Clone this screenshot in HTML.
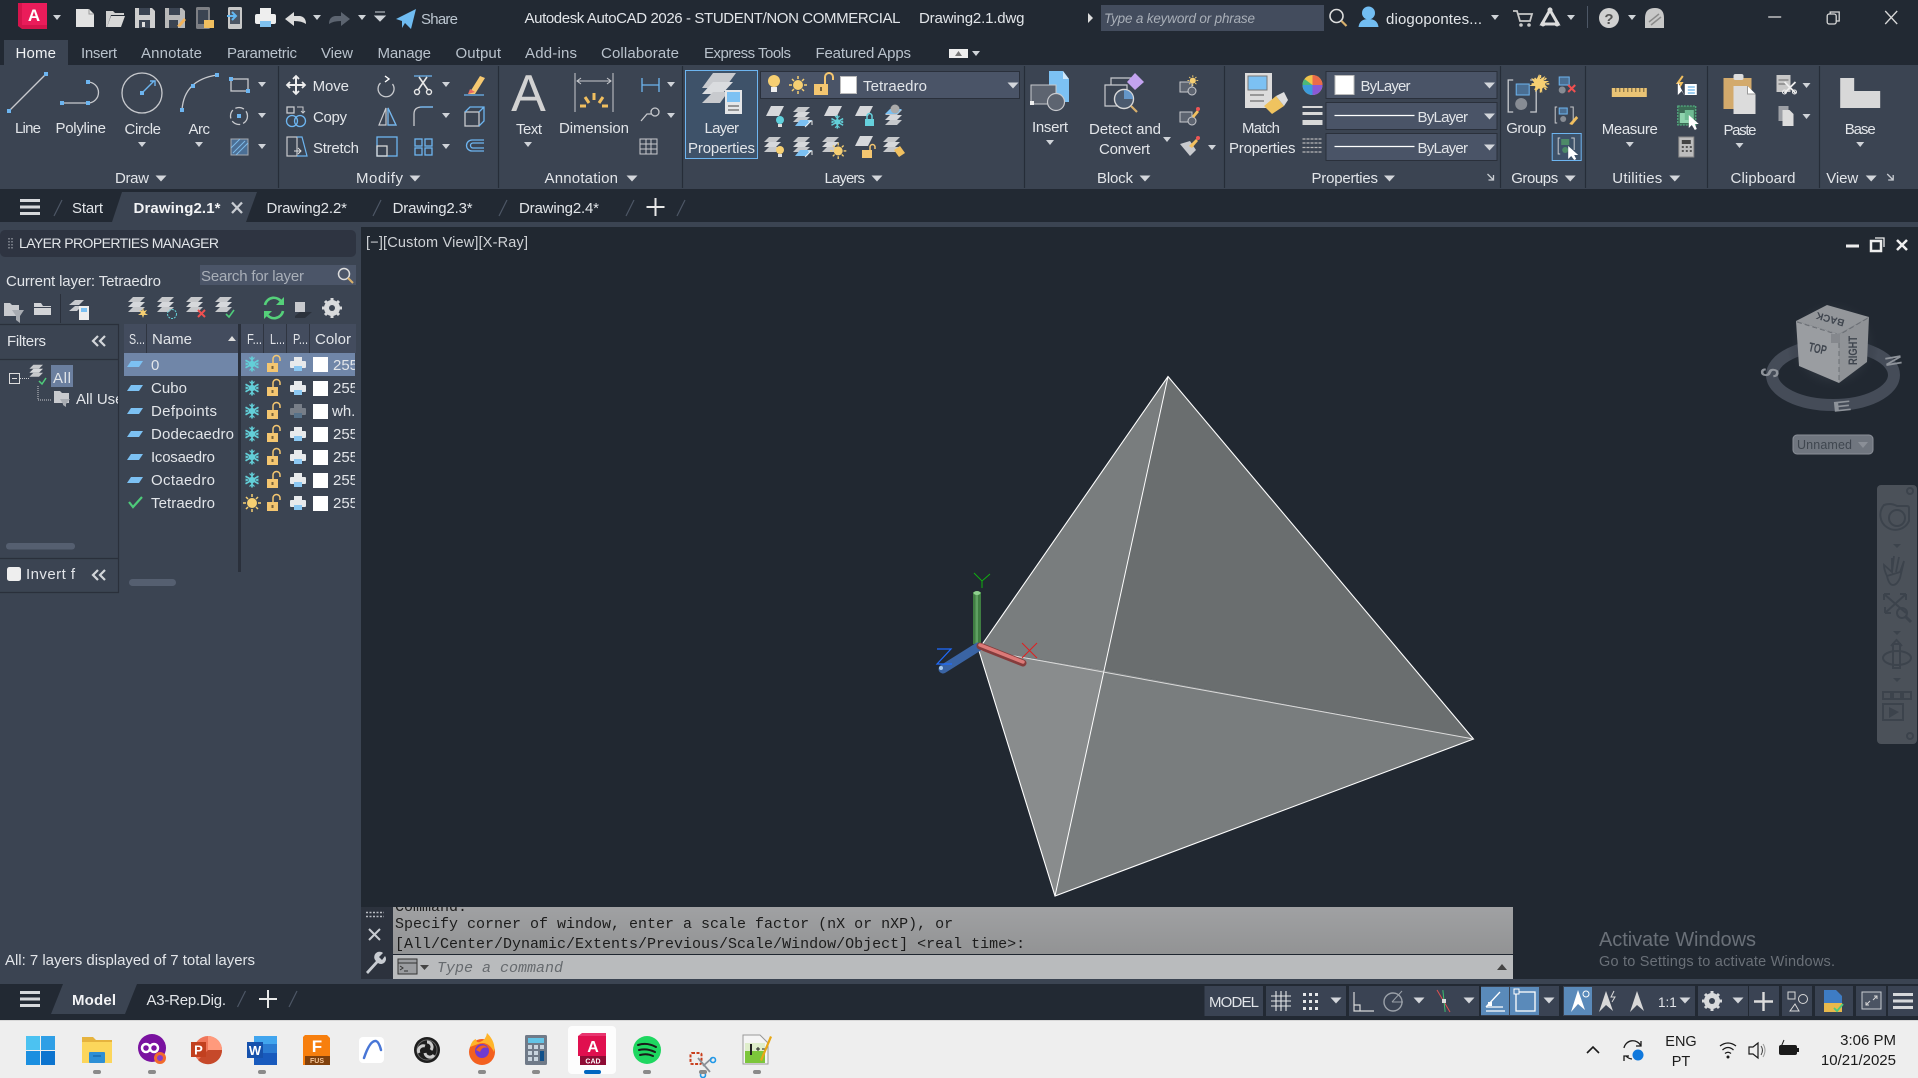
<!DOCTYPE html>
<html lang="en"><head><meta charset="utf-8"><title>Autodesk AutoCAD 2026</title>
<style>
html,body{margin:0;padding:0;width:1918px;height:1078px;overflow:hidden;background:#222933}
svg{display:block;font-family:"Liberation Sans",sans-serif;font-size:15px}
text{fill:#e2e5e9}
.tab text,text.tab{fill:#b9c2cc}
.m{font-family:"Liberation Mono",monospace;fill:#1c1c1c}
.tb{fill:#1b1b1b;font-size:14.500px}
.tm{fill:#1b1b1b;font-size:15px}
</style></head><body>
<svg width="1918" height="1078" viewBox="0 0 1918 1078" xmlns="http://www.w3.org/2000/svg">
<defs>
<path id="arr" d="M-4-2H4L0 3Z" fill="#cfd3d8"/>
<path id="arl" d="M-5.500-2.500H5.500L0 3.500Z" fill="#d3d6db"/>
<g id="h"><rect x="-2" y="-2" width="4" height="4" fill="#6db5f0"/></g>
<path id="slash" d="M4-8L-4 8" stroke="#4d5766" stroke-width="1.200" fill="none"/>
<g id="burger" fill="#d6d8db"><rect x="-10" y="-8" width="20" height="3"/><rect x="-10" y="-1.500" width="20" height="3"/><rect x="-10" y="5" width="20" height="3"/></g>
<g id="stk" fill="#c6c8cb"><path d="M-9-5L-4-10H8L3-5Z"/><path d="M-9 0L-4-5H8L3 0Z" fill="#d6d8db"/><path d="M-9 5L-4 0H8L3 5Z"/></g>
<path id="pl" d="M-9 5L-4-5H9L4 5Z" fill="#d6d8db"/>
<g id="lbulb"><circle cy="-1" r="4" fill="#5fd0dc"/><rect x="-2" y="3" width="4" height="3" fill="#ddd"/></g>
<g id="ybulb"><circle cy="-1" r="4" fill="#f6cf72"/><rect x="-2" y="3" width="4" height="3" fill="#ddd"/></g>
<g id="lock"><path d="M-1 -1V-5A3.500 3.500 0 0 1 6-5V-3" fill="none" stroke="#f4c670" stroke-width="1.500"/><rect x="-7" y="-1" width="11" height="9" fill="#f4c670"/><rect x="-2.500" y="2" width="2" height="3" fill="#77623a"/></g>
<g id="snow" stroke="#63cfd8" stroke-width="1.700" fill="none"><path d="M0-7.500V7.500M-6.500-3.700L6.500 3.700M-6.500 3.700L6.500-3.700"/><circle r="2.300" fill="#63cfd8"/><path d="M-2.500-6.500L0-4L2.500-6.500M-2.500 6.500L0 4L2.500 6.500M-6.500-1L-4 0L-6.500 1M6.500-1L4 0L6.500 1" stroke-width="1.200"/></g>
<g id="print"><rect x="-4" y="-7" width="8" height="4" fill="#e8eaec"/><rect x="-8" y="-3" width="16" height="7" rx="1" fill="#e8eaec"/><rect x="-4" y="2" width="8" height="5" fill="#8cc8f2"/></g>
<g id="sun"><circle r="5" fill="#f6cf72"/><path d="M0-9V-6M0 9V6M-9 0H-6M9 0H6M-6-6L-4-4M6 6L4 4M-6 6L-4 4M6-6L4-4" stroke="#f6cf72" stroke-width="1.500"/></g>
<path id="lyr" d="M-8 3L-4-3H8L4 3Z" fill="#7cc1f3"/>
<g id="gear"><circle r="6" fill="none" stroke="#d8dadc" stroke-width="4"/><path d="M0-10V10M-10 0H10M-7-7L7 7M-7 7L7-7" stroke="#d8dadc" stroke-width="3"/><circle r="3" fill="#3b4452"/></g>
<path id="chev" d="M-3-5L-8 0L-3 5M4-5L-1 0L4 5" fill="none" stroke="#d2d5d9" stroke-width="2.200"/>
<path id="corner" d="M-3-3L3 3M3-2V3H-2" fill="none" stroke="#c8ccd2" stroke-width="1.300"/>
<clipPath id="col"><rect x="310" y="320" width="45" height="200"/></clipPath>
<clipPath id="use"><rect x="0" y="380" width="118" height="40"/></clipPath>
<clipPath id="cmd"><rect x="393" y="907" width="1120" height="47"/></clipPath>
<linearGradient id="cg" x1="0" y1="0" x2="0" y2="1"><stop offset="0" stop-color="#a0a1a3"/><stop offset="1" stop-color="#929394"/></linearGradient>
<radialGradient id="glow"><stop offset="0" stop-color="#5c626b"/><stop offset=".7" stop-color="#3a414b"/><stop offset="1" stop-color="#222932" stop-opacity="0"/></radialGradient>
</defs>

<rect width="1918" height="1078" fill="#212831"/>

<!-- TITLE BAR -->
<rect width="1918" height="65" fill="#222933"/>
<path d="M18 3H47V29H22L18 26Z" fill="#d5144c"/><path d="M22 3H47V25H22Z" fill="#ea1c5a"/>
<text x="34" y="21" text-anchor="middle" font-size="17" font-weight="bold" style="fill:#fff">A</text>
<use href="#arr" x="57" y="17"/>
<path d="M76 9H89L94 14V27H76Z" fill="#e2e2e2"/><path d="M89 9V14H94" fill="none" stroke="#9a9a9a"/>
<path d="M106 27V11H113L115 13H124V15H111L107 27Z" fill="#d0d0d0"/><path d="M107 27L111 16H125L121 27Z" fill="#d8d8d8"/>
<path d="M135 8H152L155 11V28H135Z" fill="#cfcfcf"/><rect x="139" y="8" width="11" height="7" fill="#3b4452"/><rect x="139" y="20" width="11" height="8" fill="#3b4452"/><rect x="142" y="22" width="3" height="5" fill="#ddd"/>
<path d="M165 8H182L185 11V28H165Z" fill="#b9b9b9"/><rect x="169" y="8" width="11" height="7" fill="#3b4452"/><rect x="169" y="20" width="9" height="8" fill="#3b4452"/><path d="M177 26L184 18L186 20L180 27Z" fill="#f2b35c"/>
<rect x="196" y="7" width="14" height="22" rx="1.500" fill="#7d7f84"/><rect x="198" y="10" width="10" height="14" fill="#3b4452"/><path d="M204 20H214V28H204Z" fill="#f1bf5f"/>
<rect x="228" y="7" width="14" height="22" rx="1.500" fill="#c8c8c8"/><rect x="230" y="10" width="10" height="14" fill="#4b5563"/><path d="M227 16H235M232 12L236 16L232 20" fill="none" stroke="#63b7f1" stroke-width="2"/>
<rect x="260" y="8" width="11" height="6" fill="#eee"/><rect x="255" y="14" width="21" height="10" rx="2" fill="#eee"/><rect x="260" y="21" width="11" height="6" fill="#80c2f0"/>
<path d="M285 19L294 12V16H300Q306 17 306 24Q302 21 294 21V26Z" fill="#dcdcdc"/>
<use href="#arr" x="317" y="17"/>
<path d="M350 19L341 12V16H335Q329 17 329 24Q333 21 341 21V26Z" fill="#5c6470"/>
<use href="#arr" x="362" y="17"/>
<path d="M375 12H385M375 16H385L380 21Z" fill="#cfd3d8" stroke="#cfd3d8" stroke-width="1"/>
<path d="M396 19L416 9L411 29L405 23L402 28V21Z" fill="#6fbcf2"/>
<text x="421" y="24" textLength="37" style="fill:#bcc6d0">Share</text>
<text x="524.500" y="23" textLength="376">Autodesk AutoCAD 2026 - STUDENT/NON COMMERCIAL</text>
<text x="919" y="23" textLength="105.500">Drawing2.1.dwg</text>
<path d="M1088 13L1093 18L1088 23Z" fill="#ddd"/>
<rect x="1101" y="5" width="223" height="26" fill="#434c5d"/>
<text x="1104" y="23" textLength="151" font-size="13.500" font-style="italic" style="fill:#a9afb8">Type a keyword or phrase</text>
<g transform="translate(-.5,0)">
<circle cx="1337" cy="16" r="6.500" fill="none" stroke="#ddd" stroke-width="1.600"/><path d="M1342 21L1347 26" stroke="#d8b06c" stroke-width="2.200"/>
<circle cx="1369" cy="13" r="6.500" fill="#72bdf2"/><path d="M1359 27Q1360 19 1369 19Q1378 19 1379 27Z" fill="#72bdf2"/>
</g>
<g transform="translate(-1,0)">
<text x="1387" y="24" textLength="96" font-size="15">diogopontes...</text>
<use href="#arr" x="1496" y="17"/>
<path d="M1514 11H1518L1521 21H1531L1533 14H1519" fill="none" stroke="#c8c8c8" stroke-width="1.800"/><circle cx="1522" cy="25" r="1.800" fill="#c8c8c8"/><circle cx="1530" cy="25" r="1.800" fill="#c8c8c8"/>
<path d="M1551 10L1559 24H1543Z" fill="none" stroke="#dcdcdc" stroke-width="3"/><circle cx="1551" cy="10" r="2.500" fill="#dcdcdc"/><circle cx="1544" cy="24" r="2.500" fill="#dcdcdc"/><circle cx="1558" cy="24" r="2.500" fill="#dcdcdc"/>
<use href="#arr" x="1572" y="17"/>
<path d="M1588.500 6V28" stroke="#4d5766"/>
<circle cx="1610" cy="18" r="10" fill="#d0d0d0"/><text x="1610" y="24" text-anchor="middle" font-size="15" font-weight="bold" style="fill:#555">?</text>
<use href="#arr" x="1633" y="17"/>
<path d="M1646 28V18Q1646 8 1656 8Q1665 8 1665 18V28Z" fill="#c8c8c8"/><path d="M1650 22L1660 14M1652 25L1662 17" stroke="#8a8a8a" stroke-width="1.500"/>
</g>
<g transform="translate(-1.800,0)">
<path d="M1770 17H1783" stroke="#d8d8d8" stroke-width="1.300"/>
<rect x="1829" y="14" width="9" height="10" rx="2" fill="none" stroke="#d8d8d8" stroke-width="1.300"/><path d="M1832 14V12H1841V21H1838" fill="none" stroke="#d8d8d8" stroke-width="1.300"/>
<path d="M1887 11L1899 24M1899 11L1887 24" stroke="#d8d8d8" stroke-width="1.300"/>
</g>

<!-- TABS -->
<rect x="4" y="40" width="64" height="25" fill="#3b4452"/>
<text x="15.500" y="58" textLength="40.500" style="fill:#f0f2f4">Home</text>
<g class="tab">
<text x="81" y="58" textLength="36">Insert</text>
<text x="141" y="58" textLength="61">Annotate</text>
<text x="227" y="58" textLength="70">Parametric</text>
<text x="321" y="58" textLength="32">View</text>
<text x="377.500" y="58" textLength="53.500">Manage</text>
<text x="455.500" y="58" textLength="45.500">Output</text>
<text x="525" y="58" textLength="52">Add-ins</text>
<text x="601" y="58" textLength="78">Collaborate</text>
<text x="704" y="58" textLength="87">Express Tools</text>
<text x="815.500" y="58" textLength="95.500">Featured Apps</text>
</g>
<rect x="949" y="49" width="19" height="9" fill="#eee"/><path d="M955 56L958.500 51L962 56Z" fill="#777"/>
<use href="#arr" x="976" y="53"/>

<!-- RIBBON -->
<rect y="65" width="1918" height="124" fill="#3b4452"/>
<path d="M278.500 66V188M498.500 66V188M682.500 66V188M1024.500 66V188M1224.500 66V188M1500.500 66V188M1585.500 66V188M1707.500 66V188M1819.500 66V188" stroke="#262d38" stroke-width="1.200"/>

<!-- Draw -->
<path d="M9 111L46 74" stroke="#c8cace" stroke-width="1.300"/><use href="#h" x="9" y="111"/><use href="#h" x="46" y="74"/>
<text x="15" y="133" textLength="26">Line</text>
<path d="M62 103H88A10 10 0 0 0 88 82" fill="none" stroke="#c8cace" stroke-width="1.300"/><use href="#h" x="62" y="103"/><use href="#h" x="88" y="103"/><use href="#h" x="88" y="82"/>
<text x="55.500" y="133" textLength="50.500">Polyline</text>
<circle cx="142" cy="93" r="20" fill="none" stroke="#c8cace" stroke-width="1.300"/><path d="M142 93L154 81M150 81H155V86" fill="none" stroke="#6db5f0" stroke-width="1.400"/><use href="#h" x="142" y="93"/>
<text x="124.500" y="134" textLength="36.500">Circle</text><use href="#arr" x="142" y="144"/>
<path d="M182 110Q184 80 217 75" fill="none" stroke="#c8cace" stroke-width="1.300"/><use href="#h" x="182" y="110"/><use href="#h" x="193" y="86"/><use href="#h" x="217" y="75"/>
<text x="188.500" y="134" textLength="21.500">Arc</text><use href="#arr" x="199" y="144"/>
<rect x="231" y="79" width="17" height="12" fill="none" stroke="#c8cace" stroke-width="1.300"/><use href="#h" x="231" y="79"/><use href="#h" x="248" y="91"/><use href="#arr" x="262" y="84"/>
<circle cx="239" cy="116" r="8.500" fill="none" stroke="#c8cace" stroke-width="1.300" stroke-dasharray="9 3"/><use href="#h" x="239" y="116"/><use href="#arr" x="262" y="115"/>
<rect x="231" y="139" width="17" height="16" fill="#4b6f95" stroke="#a6aab0"/><path d="M233 153L245 141M236 155L248 143M231 148L240 139" stroke="#7cb9e8"/><use href="#arr" x="262" y="146"/>
<text x="115" y="183" textLength="34">Draw</text><use href="#arl" x="161" y="178"/>

<!-- Modify -->
<path d="M296 77V93M288 85H304" stroke="#eee" stroke-width="2"/><path d="M293 79L296 76L299 79M293 91L296 94L299 91M290 82L287 85L290 88M302 82L305 85L302 88" fill="none" stroke="#eee" stroke-width="1.800"/>
<text x="312.600" y="91" textLength="36.400">Move</text>
<rect x="287" y="107" width="7" height="6" fill="none" stroke="#c8cace" stroke-width="1.300"/><path d="M297 107H303V113M301 111L303 113L305 111" fill="none" stroke="#c8cace"/><circle cx="292" cy="121" r="5.500" fill="none" stroke="#6db5f0" stroke-width="1.300"/><circle cx="300" cy="121" r="5.500" fill="none" stroke="#6db5f0" stroke-width="1.300"/>
<text x="313" y="122" textLength="34">Copy</text>
<rect x="287" y="137" width="10" height="19" fill="none" stroke="#c8cace" stroke-width="1.200"/><path d="M297 137H302L307 156H297" fill="none" stroke="#6db5f0" stroke-width="1.200"/><path d="M294 151H301M298 148L301 151L298 154" fill="none" stroke="#ddd"/>
<text x="313" y="153" textLength="46">Stretch</text>
<path d="M381 76A8 8 0 1 0 393 77" fill="none" stroke="#c8cace" stroke-width="1.300" transform="translate(-.5,7)"/><path d="M385 76L389 79L385 82" fill="none" stroke="#fff" stroke-width="1.400"/>
<path d="M386 108L379 125H386ZM388 108L396 125H388Z" fill="none" stroke="#c8cace" stroke-width="1.200"/><path d="M388 108L396 125H388Z" fill="none" stroke="#6db5f0" stroke-width="1.200"/>
<rect x="377" y="137" width="20" height="19" fill="none" stroke="#6db5f0" stroke-width="1.300"/><rect x="377" y="146" width="10" height="10" fill="none" stroke="#d8d8d8" stroke-width="1.300"/>
<path d="M414 76H432" stroke="#6db5f0" stroke-width="1.300"/><path d="M419 77L428 90M427 77L418 90" stroke="#e8e8e8" stroke-width="1.600"/><circle cx="417" cy="92" r="2.500" fill="none" stroke="#e8e8e8" stroke-width="1.400"/><circle cx="429" cy="92" r="2.500" fill="none" stroke="#e8e8e8" stroke-width="1.400"/>
<use href="#arr" x="446" y="84"/>
<path d="M414 126V114Q414 107 422 107H433" fill="none" stroke="#c8cace" stroke-width="1.300"/><path d="M420 107H433" stroke="#6db5f0" stroke-width="1.300"/><use href="#arr" x="446" y="115"/>
<g fill="none" stroke="#6db5f0" stroke-width="1.300"><rect x="415" y="139" width="7" height="7"/><rect x="425" y="139" width="7" height="7"/><rect x="415" y="148" width="7" height="7"/><rect x="425" y="148" width="7" height="7"/></g><use href="#arr" x="446" y="146"/>
<path d="M470 92L480 76L485 78L475 94H468Z" fill="#f6c971"/><path d="M468 94L470 89L475 92Z" fill="#e86a63"/><path d="M464 95H484" stroke="#6db5f0" stroke-width="1.200"/>
<rect x="465" y="112" width="14" height="14" fill="none" stroke="#c8cace" stroke-width="1.300"/><path d="M465 112L470 107H484V121L479 126M479 112L484 107" fill="none" stroke="#6db5f0" stroke-width="1.300"/>
<path d="M484 140H472A5.500 5.500 0 0 0 472 151H484M484 143H473A2.500 2.500 0 0 0 473 148H484" fill="none" stroke="#6db5f0" stroke-width="1.300"/>
<text x="356" y="183" textLength="47">Modify</text><use href="#arl" x="415" y="178"/>

<!-- Annotation -->
<text x="528.500" y="111" text-anchor="middle" font-size="52" style="fill:#d2d2d2">A</text>
<text x="516" y="134" textLength="26">Text</text><use href="#arr" x="528" y="144"/>
<path d="M575 73V112M613 73V112" stroke="#c8cace"/><path d="M577 81H611M581 78L577 81L581 84M607 78L611 81L607 84" fill="none" stroke="#c8cace"/>
<path d="M594 93V100M585 97L589 103M603 97L599 103M580 106H586M602 106H608" stroke="#f1bf5f" stroke-width="3"/>
<text x="559" y="133" textLength="70">Dimension</text>
<path d="M642 78V92M659 78V92M642 85H659" stroke="#6db5f0" stroke-width="1.300"/><use href="#arr" x="671" y="84"/>
<path d="M641 121L647 114H651" fill="none" stroke="#c8cace" stroke-width="1.300"/><circle cx="655" cy="112" r="4" fill="none" stroke="#c8cace" stroke-width="1.300"/><use href="#arr" x="671" y="115"/>
<g fill="none" stroke="#c8cace"><rect x="640" y="139" width="17" height="15"/><path d="M640 144H657M640 149H657M646 139V154M651 139V154"/></g>
<text x="544.500" y="183" textLength="73.500">Annotation</text><use href="#arl" x="632" y="178"/>

<!-- Layers -->
<rect x="685.500" y="70.500" width="72" height="88" fill="#3e5269" stroke="#6db5f0"/>
<g fill="#c8cace"><path d="M702 88L713 73H736L725 88Z"/><path d="M702 94L713 82H733L722 94Z" fill="#dadcdf"/><path d="M702 103L713 92H728L720 103Z"/></g>
<rect x="725" y="90" width="17" height="24" fill="#e4e6e8"/><rect x="727" y="92" width="13" height="10" fill="#7cc1f3"/><path d="M728 106H739M728 110H739" stroke="#444"/>
<text x="704.500" y="133" textLength="34.500">Layer</text>
<text x="688" y="153" textLength="67">Properties</text>
<rect x="760.500" y="71.500" width="259" height="27" fill="#4a5467" stroke="#2a303b"/>
<circle cx="774" cy="81" r="6" fill="#f6cf72"/><rect x="771" y="87" width="6" height="5" fill="#eee"/>
<use href="#sun" x="798" y="85"/>
<path d="M825 84V77A4 4 0 0 1 833 77V80" fill="none" stroke="#f4c670" stroke-width="2"/><rect x="814" y="84" width="14" height="11" fill="#f4c670"/><rect x="820" y="87" width="2" height="4" fill="#77623a"/>
<rect x="840.500" y="76.500" width="16" height="17" fill="#fff" stroke="#bbb"/>
<text x="863" y="91" textLength="64">Tetraedro</text><use href="#arl" x="1013" y="85"/>
<use href="#pl" x="775" y="111"/><use href="#lbulb" x="780" y="121"/>
<use href="#stk" x="802" y="117"/><path d="M795 126L800 120H812L807 126Z" fill="#7cc1f3"/><path d="M805 127L811 121M808 121H812V125" stroke="#eee" fill="none"/>
<use href="#pl" x="833" y="111"/><use href="#snow" x="837" y="121" transform="translate(84,13) scale(.9)"/>
<use href="#pl" x="864" y="111"/><rect x="865" y="119" width="9" height="7" fill="#66d1dd"/><path d="M867 119V116A2.500 2.500 0 0 1 872 116V119" fill="none" stroke="#66d1dd" stroke-width="1.500"/>
<g transform="translate(894,117)"><use href="#stk" y="3"/><path d="M-9-3L-4-8H8L3-3Z" fill="#7cc1f3"/><circle cy="-8" cx="1" r="4.500" fill="#aaa"/></g>
<use href="#stk" x="773" y="147"/><use href="#ybulb" x="780" y="151"/>
<use href="#stk" x="802" y="147"/><path d="M795 156L800 150H812L807 156Z" fill="#7cc1f3"/><path d="M805 157L811 151M808 151H812V155" stroke="#eee" fill="none"/>
<use href="#stk" x="831" y="147"/><use href="#sun" x="838" y="151" transform="translate(84,15) scale(.9)"/>
<use href="#pl" x="864" y="141"/><rect x="862" y="150" width="10" height="8" fill="#f4c670"/><path d="M870 150V147A2.500 2.500 0 0 1 875 147V149" fill="none" stroke="#f4c670" stroke-width="1.500"/>
<use href="#stk" x="892" y="147"/><path d="M894 150L900 146L905 153L899 157Z" fill="#f0c060"/>
<text x="824.500" y="183" textLength="40.500">Layers</text><use href="#arl" x="877" y="178"/>

<!-- Block -->
<path d="M1049 71H1063L1069 79V102H1049Z" fill="#7cc1f3"/><path d="M1063 71V79H1069" fill="#cfe8fb"/>
<rect x="1031" y="85" width="25" height="19" fill="#5d6470" stroke="#c8cace"/><circle cx="1056" cy="102" r="8.500" fill="#5d6470" stroke="#c8cace" stroke-width="1.200"/><rect x="1030" y="101" width="4" height="4" fill="#eee"/>
<text x="1032" y="132" textLength="36">Insert</text><use href="#arr" x="1050" y="142"/>
<path d="M1111 85V78H1132V84M1105 85H1127V106H1105Z" fill="none" stroke="#c8cace" stroke-width="1.200"/><path d="M1135 73L1144 82L1135 90L1127 82Z" fill="#c3a3f0"/>
<circle cx="1124" cy="99" r="9.500" fill="#4b5a6e" stroke="#d8d8d8" stroke-width="1.400"/><path d="M1124 99V90A9 9 0 0 1 1133 99Z" fill="#6496c8"/><path d="M1131 106L1137 112" stroke="#d8b06c" stroke-width="2.200"/>
<text x="1089" y="134" textLength="72">Detect and</text><text x="1099" y="154" textLength="51">Convert</text><use href="#arr" x="1167" y="139"/>
<rect x="1180" y="82" width="12" height="10" fill="#5d6470" stroke="#c8cace"/><circle cx="1192" cy="91" r="4" fill="#5d6470" stroke="#c8cace"/><use href="#sun" x="1193" y="81" transform="translate(477,32) scale(.6)"/>
<rect x="1180" y="112" width="12" height="10" fill="#5d6470" stroke="#c8cace"/><circle cx="1192" cy="121" r="4" fill="#5d6470" stroke="#c8cace"/><path d="M1192 116L1197 110L1199 112L1194 118Z" fill="#f1bf5f"/><circle cx="1198" cy="109" r="2" fill="#e55"/>
<path d="M1180 144L1190 141L1196 150L1190 156Z" fill="#c8cace"/><path d="M1189 146L1196 139L1198 141L1192 148Z" fill="#f1bf5f"/><circle cx="1198" cy="138" r="2" fill="#e55"/>
<use href="#arr" x="1212" y="147"/>
<text x="1097" y="183" textLength="36">Block</text><use href="#arl" x="1145" y="178"/>

<!-- Properties -->
<rect x="1245" y="73" width="27" height="35" fill="#dcdcdc"/><rect x="1248" y="76" width="19" height="14" fill="#7cc1f3" stroke="#777"/><path d="M1250 95H1264M1250 101H1264" stroke="#555"/>
<path d="M1264 106L1276 96L1284 106L1272 114Z" fill="#efc35f"/><path d="M1276 96L1284 92L1288 100L1284 106Z" fill="#ddd"/>
<text x="1242" y="133" textLength="38">Match</text><text x="1229" y="153" textLength="66.500">Properties</text>
<g transform="translate(-.5,0)">
<circle cx="1313" cy="85" r="10" fill="#f0c44c"/><path d="M1313 85V75A10 10 0 0 1 1323 85Z" fill="#ea6b4a"/><path d="M1313 85H1323A10 10 0 0 1 1313 95Z" fill="#8a5ad6"/><path d="M1313 85V95A10 10 0 0 1 1303 85Z" fill="#3c9bdc"/><path d="M1313 85H1303A10 10 0 0 1 1305 79Z" fill="#4cb87a"/>
<g fill="#d8d8d8"><rect x="1303" y="106" width="20" height="2"/><rect x="1303" y="112" width="20" height="3"/><rect x="1303" y="120" width="20" height="5"/></g>
<path d="M1303 139H1323M1303 143H1323M1303 147.500H1323M1303 152H1323" stroke="#b8b8b8" stroke-width="1.200" stroke-dasharray="3 1"/>
<g fill="#4a5467" stroke="#2a303b"><rect x="1326.500" y="71.500" width="171" height="27"/><rect x="1326.500" y="102.500" width="171" height="27"/><rect x="1326.500" y="133.500" width="171" height="27"/></g>
<rect x="1335.500" y="75.500" width="19" height="19" fill="#fff" stroke="#bbb"/>
<text x="1361" y="91" textLength="50">ByLayer</text><use href="#arl" x="1490" y="85"/>
<path d="M1335 115.500H1415M1335 146.500H1415" stroke="#fff" stroke-width="1.200"/>
<text x="1418" y="122" textLength="50.500">ByLayer</text><use href="#arl" x="1490" y="116"/>
<text x="1418" y="153" textLength="50.500">ByLayer</text><use href="#arl" x="1490" y="147"/>
<text x="1312" y="183" textLength="66.500">Properties</text><use href="#arl" x="1390" y="178"/><use href="#corner" x="1491" y="177"/>
</g>

<!-- Groups -->
<g transform="translate(-.8,0)">
<path d="M1514 80H1509V112H1514M1531 80H1537V112H1531" fill="none" stroke="#c8cace" stroke-width="1.300"/>
<rect x="1517" y="84" width="13" height="11" fill="#4a6e92" stroke="#6db5f0"/><circle cx="1522" cy="104" r="6" fill="#878c94"/>
<use href="#sun" x="1537" y="82" transform="translate(35,3.500) scale(.98)"/><path d="M1537 80l3-6l1 5l5-3l-2 5l6 0l-5 3l4 4l-6-1l0 6l-3-5l-4 4l0-6l-6 0l5-3l-3-5l5 2z" fill="#f6cf72"/>
<text x="1507" y="133" textLength="40">Group</text>
<rect x="1560" y="77" width="10" height="8" fill="#4a6e92" stroke="#6db5f0"/><circle cx="1563" cy="90" r="3.500" fill="#878c94"/><path d="M1569 85L1576 92M1576 85L1569 92" stroke="#f05050" stroke-width="2"/>
<path d="M1558 107H1556V123H1558M1571 107H1574V123H1571" fill="none" stroke="#c8cace"/><rect x="1560" y="108" width="8" height="6" fill="#4a6e92" stroke="#6db5f0"/><circle cx="1564" cy="119" r="3" fill="#878c94"/><path d="M1570 124L1577 116L1579 118L1573 125Z" fill="#f1bf5f"/>
<rect x="1553" y="133.500" width="29" height="27" fill="#3e5269" stroke="#6db5f0"/>
<path d="M1561 138H1559V154H1561M1572 138H1575V150" fill="none" stroke="#c8cace"/><rect x="1562" y="139" width="8" height="6" fill="#4d8a68"/><circle cx="1566" cy="150" r="3" fill="#4d8a68"/><path d="M1569 146V159L1572 156L1575 160L1577 159L1575 155H1579Z" fill="#fff"/>
<text x="1512" y="183" textLength="47">Groups</text><use href="#arl" x="1571" y="178"/>
</g>

<!-- Utilities -->
<g transform="translate(-1.200,0)">
<rect x="1613" y="88" width="35" height="9" fill="#eac475"/><path d="M1617 88V92M1621 88V92M1625 88V92M1629 88V92M1633 88V92M1637 88V92M1641 88V92M1645 88V92" stroke="#6a5c3c"/>
<text x="1603" y="134" textLength="56">Measure</text><use href="#arr" x="1631" y="144"/>
<path d="M1684 76L1679 83H1683L1680 88" stroke="#f1bf5f" stroke-width="2" fill="none"/><path d="M1679 82V95L1683 91L1686 96Z" fill="#fff"/><rect x="1686" y="84" width="12" height="11" fill="#fff"/><path d="M1689 87H1696M1689 90H1696M1689 93H1696" stroke="#3c9bdc"/>
<rect x="1679" y="106" width="18" height="19" fill="#3b6a55" stroke="#59c08a" stroke-dasharray="2 1"/><rect x="1681" y="113" width="9" height="10" fill="#8fd3ae"/><rect x="1686" y="110" width="9" height="10" fill="#6fbb93"/><path d="M1690 115V128L1693 125L1696 130L1698 129L1696 124H1700Z" fill="#fff"/>
<rect x="1680" y="137" width="15" height="20" fill="#bdbdbd" stroke="#888"/><rect x="1683" y="140" width="9" height="4" fill="#444"/><g fill="#555"><rect x="1683" y="146" width="2" height="2"/><rect x="1687" y="146" width="2" height="2"/><rect x="1691" y="146" width="2" height="2"/><rect x="1683" y="150" width="2" height="2"/><rect x="1687" y="150" width="2" height="2"/><rect x="1691" y="150" width="2" height="2"/></g>
<text x="1613.500" y="183" textLength="50">Utilities</text><use href="#arl" x="1676" y="178"/>
</g>

<!-- Clipboard -->
<g transform="translate(-1.500,0)">
<rect x="1725" y="78" width="28" height="31" fill="#d3aa6c"/><rect x="1735" y="74" width="10" height="6" rx="2" fill="#ddd"/><path d="M1735 86H1749L1757 94V114H1735Z" fill="#dcdcdc"/><path d="M1749 86V94H1757" fill="#fff" stroke="#999"/>
<text x="1725" y="135" textLength="33">Paste</text><use href="#arr" x="1741" y="145"/>
<rect x="1778" y="75" width="14" height="17" fill="#c8c8c8"/><path d="M1780 80H1790M1780 84H1788" stroke="#666"/><path d="M1786 82L1797 93M1797 82L1786 93" stroke="#eee" stroke-width="1.800"/><circle cx="1786" cy="92" r="2" fill="none" stroke="#eee"/><circle cx="1796" cy="92" r="2" fill="none" stroke="#eee"/>
<use href="#arr" x="1808" y="85"/>
<rect x="1780" y="106" width="10" height="15" fill="#9c9fa5"/><path d="M1784 110H1791L1795 114V126H1784Z" fill="#dcdcdc"/>
<use href="#arr" x="1808" y="116"/>
<text x="1732" y="183" textLength="65">Clipboard</text>
</g>

<!-- View -->
<g transform="translate(-1.800,0)">
<path d="M1842 78H1856V91H1882V108H1842Z" fill="#d8d8d8"/>
<text x="1846.500" y="134" textLength="31">Base</text><use href="#arr" x="1862" y="144"/>
<text x="1828" y="183" textLength="32">View</text><use href="#arl" x="1873" y="178"/><use href="#corner" x="1892" y="177"/>
</g>

<!-- FILE TABS -->
<rect y="189" width="1918" height="33" fill="#222933"/>
<use href="#burger" x="30" y="207"/>
<use href="#slash" x="58" y="208"/>
<text x="72" y="213" textLength="31">Start</text>
<path d="M112 222L122 192H257L246 222Z" fill="#3b4452"/>
<text x="133.500" y="213" textLength="87" font-weight="bold" style="fill:#f2f3f5">Drawing2.1*</text>
<path d="M232 202.500L242 213M242 202.500L232 213" stroke="#c8ccd2" stroke-width="2.300"/>
<text x="266.500" y="213" textLength="80.500">Drawing2.2*</text><use href="#slash" x="377" y="208"/>
<text x="392.600" y="213" textLength="80">Drawing2.3*</text><use href="#slash" x="503" y="208"/>
<text x="519" y="213" textLength="80">Drawing2.4*</text><use href="#slash" x="630" y="208"/>
<path d="M655.500 198V216M646.500 207H664.500" stroke="#e8e8e8" stroke-width="2"/><use href="#slash" x="681" y="208"/>
<rect y="222" width="1918" height="5" fill="#3b4452"/>

<!-- VIEWPORT -->
<rect x="361" y="227" width="1557" height="757" fill="#212831"/>
<text x="366" y="247" font-size="14.500" textLength="162" style="fill:#cfd2d6">[−][Custom View][X-Ray]</text>
<polygon points="1168,376.500 978.600,649.500 1104,670" fill="#797d7e"/>
<polygon points="1168,376.500 1473.500,739 1104,670" fill="#6a6e6f"/>
<polygon points="978.600,649.500 1104,670 1055,896" fill="#898c8d"/>
<polygon points="1104,670 1473.500,739 1055,896" fill="#797d7e"/>
<polygon points="1168,376.500 1473.500,739 1055,896 978.600,649.500" fill="none" stroke="#fff" stroke-width="1.100"/>
<path d="M1168 376.500L1055 896" stroke="#fff" stroke-width="1"/>
<path d="M978.600 649.500L1473.500 739" stroke="#dcdcdc" stroke-width="1"/>
<!-- UCS -->
<path d="M974 573L982 581L990 574M982 581V588" stroke="#10b010" stroke-width="1" fill="none"/>
<rect x="973" y="592" width="8" height="52" fill="#3f7e42"/><rect x="975.500" y="592" width="2.500" height="52" fill="#5fa062"/><ellipse cx="977" cy="593" rx="3.500" ry="2" fill="#8ed08e"/>
<path d="M978 647L943 669" stroke="#3a64a4" stroke-width="9" stroke-linecap="round"/><circle cx="941" cy="668" r="2" fill="#a4c8ee"/>
<path d="M937 649H951L937 664H952" stroke="#1f6cff" stroke-width="1.200" fill="none"/>
<path d="M980 646L1023 663" stroke="#853c3c" stroke-width="7" stroke-linecap="round"/><path d="M980 645L1023 662" stroke="#dc7a78" stroke-width="3.500" stroke-linecap="round"/>
<path d="M1022 643L1037 658M1037 643L1022 658" stroke="#e02020" stroke-width="1"/>
<!-- view controls -->
<rect x="1846" y="244.500" width="13" height="3" fill="#eee"/>
<rect x="1871" y="241" width="10" height="10" fill="none" stroke="#eee" stroke-width="2.500"/><path d="M1875 238H1884V247" fill="none" stroke="#eee" stroke-width="1.300"/>
<path d="M1897 240L1907 250M1907 240L1897 250" stroke="#eee" stroke-width="2.500"/>
<!-- view cube -->
<ellipse cx="1833" cy="375" rx="61" ry="30" fill="none" stroke="#454c58" stroke-width="12"/>
<circle cx="1833" cy="345" r="46" fill="url(#glow)" opacity=".45"/>
<polygon points="1796,321 1827,305 1869,317 1839,334" fill="#93969a"/>
<polygon points="1796,321 1839,334 1839,383 1799,366" fill="#9a9da1"/>
<polygon points="1869,317 1867,362 1839,383 1839,334" fill="#8f9296"/>
<path d="M1797 322L1839 335L1868 318M1839 335V383" fill="none" stroke="#6a6e74" stroke-dasharray="5 3"/>
<rect x="1831" y="334" width="9" height="9" fill="#85888d"/>
<text transform="translate(1808,351) rotate(12) scale(.68,1)" font-size="13" font-weight="bold" style="fill:#3f454e">TOP</text>
<text transform="translate(1857,365) rotate(-90) scale(.78,1)" font-size="12" font-weight="bold" style="fill:#3f454e">RIGHT</text>
<text transform="translate(1845,320) rotate(196)" font-size="10" font-weight="bold" style="fill:#3f454e">BACK</text>
<text transform="translate(1778,378) rotate(-85) scale(1,1.800)" font-size="14" font-weight="bold" style="fill:#8e939a">S</text>
<text transform="translate(1885,357) rotate(80) scale(1,1.600)" font-size="14" font-weight="bold" style="fill:#8e939a">N</text>
<text transform="translate(1833,412) rotate(-6) scale(1.900,.95)" font-size="15" font-weight="bold" style="fill:#8e939a">E</text>
<rect x="1793" y="435" width="80" height="19" rx="4" fill="#70767f" stroke="#8a8f97"/>
<text x="1797" y="449" font-size="12.500" textLength="55" style="fill:#3f464f">Unnamed</text><path d="M1858 442H1868L1863 448Z" fill="#8a8f97"/>
<!-- nav bar -->
<rect x="1877" y="485" width="40" height="259" rx="4" fill="#4b5159"/>
<g fill="none" stroke="#3c434c" stroke-width="2">
<circle cx="1910" cy="491" r="3"/>
<path d="M1884 505A15 15 0 1 0 1909 521V508Q1909 506 1907 506H1897A16 16 0 0 0 1884 505Z"/><circle cx="1897" cy="518" r="8"/>
<path d="M1887 576Q1884 570 1884 565L1892 572V558M1892 572L1894 556M1896 572L1899 557M1900 572L1904 561L1900 578Q1897 585 1893 585Q1889 585 1887 576Z" stroke-width="1.800"/>
<path d="M1884 594L1906 613M1906 594L1885 613M1884 594h6M1884 594v6M1906 594h-6M1906 594v6M1885 613h6M1885 613v-6" />
<circle cx="1902" cy="613" r="5"/><path d="M1906 617L1911 622" stroke-width="3"/>
<ellipse cx="1897" cy="658" rx="14" ry="7"/><rect x="1893" y="644" width="7" height="24"/><path d="M1891 646L1896.500 640L1902 646"/>
<rect x="1883" y="692" width="8" height="7"/><rect x="1893" y="692" width="8" height="7"/><rect x="1903" y="692" width="8" height="7"/>
<rect x="1883" y="704" width="20" height="16"/>
<circle cx="1910" cy="736" r="3"/>
</g>
<path d="M1889 707V718L1899 712Z" fill="#3c434c"/>
<path d="M1893 544H1901L1897 548ZM1893 631H1901L1897 635ZM1893 678H1901L1897 682Z" fill="#3c434c"/>
<!-- activate -->
<text x="1599" y="946" font-size="20" textLength="157" style="fill:#6a7078">Activate Windows</text>
<text x="1599" y="966" font-size="14.500" textLength="236" style="fill:#6a7078">Go to Settings to activate Windows.</text>

<!-- PALETTE -->
<rect y="227" width="361" height="750" fill="#3b4452"/>
<rect y="230" width="356" height="27" rx="5" fill="#2e3441"/>
<path d="M9 238V250M12 238V250" stroke="#8a8f98" stroke-dasharray="1.500 1.500" stroke-width="1.500"/>
<text x="19" y="248" textLength="200" font-size="14">LAYER PROPERTIES MANAGER</text>
<text x="6" y="286" textLength="155">Current layer: Tetraedro</text>
<rect x="200" y="265" width="156" height="20" fill="#4b5568"/>
<text x="201" y="281" textLength="103" style="fill:#a9afb8">Search for layer</text>
<circle cx="344" cy="274" r="5.500" fill="none" stroke="#ddd" stroke-width="1.500"/><path d="M348 278L353 283" stroke="#d8b06c" stroke-width="2"/>
<!-- palette toolbar -->
<path d="M4 303H10L12 305H19V316H4Z" fill="#c8cace"/><path d="M12 310H24L20 316V323L16 320V316Z" fill="#a8acb2"/>
<path d="M34 303H41L43 306H51V315H34Z" fill="#d2d4d7"/><rect x="34" y="307" width="17" height="1" fill="#3b4452"/>
<path d="M60.500 294V323" stroke="#2a303b"/>
<g fill="#c8cace"><path d="M69 305L75 300H84L79 305Z"/><path d="M69 311L75 306H82L77 311Z"/></g><rect x="79" y="306" width="10" height="14" fill="#eee"/><rect x="81" y="308" width="6" height="4" fill="#7cc1f3"/>
<use href="#stk" x="137" y="307"/><path d="M143 308l1 3l3-1l-2 3l3 2l-4 0l-1 3l-1-3l-4 0l3-2l-2-3l3 1z" fill="#f6cf72"/>
<use href="#stk" x="166" y="307"/><circle cx="172" cy="314" r="4.500" fill="none" stroke="#63cfd8" stroke-width="1" stroke-dasharray="2 1"/>
<use href="#stk" x="195" y="307"/><path d="M198 310L205 317M205 310L198 317" stroke="#f05050" stroke-width="2"/>
<use href="#stk" x="224" y="307"/><path d="M226 314L229 317L234 310" fill="none" stroke="#4ecb7a" stroke-width="1.600"/>
<path d="M265 305A9 9 0 0 1 282 303M283 311A9 9 0 0 1 266 313" fill="none" stroke="#55d07a" stroke-width="2.600"/><path d="M284 297V305H276ZM264 319V311H272Z" fill="#55d07a"/>
<rect x="295" y="302" width="10" height="10" fill="#c8cace"/><path d="M295 316L300 312H312L305 318H295Z" fill="#2c323c"/>
<use href="#gear" x="332" y="308"/>
<!-- filters -->
<g fill="none" stroke="#2a303b" stroke-width="1.200"><path d="M0 324.500H118.500V592.500H0M0 359.500H118.500M0 558.500H118.500"/></g>
<text x="7" y="346" textLength="39">Filters</text><use href="#chev" x="101" y="341"/>
<rect x="9.500" y="373.500" width="10" height="10" fill="none" stroke="#ddd"/><path d="M12 378.500H17" stroke="#ddd"/>
<path d="M20 378.500H30M38 386V400H52" fill="none" stroke="#c8cace" stroke-dasharray="1 1"/>
<use href="#stk" x="37" y="376" transform="translate(7,72) scale(.8)"/><path d="M39 381L42 384L46 378" fill="none" stroke="#4ecb7a" stroke-width="1.500"/>
<rect x="51" y="365" width="22" height="22" fill="#6b7f9f"/>
<text x="53" y="383" textLength="18">All</text>
<path d="M54 391H60L62 393H69V403H54Z" fill="#c8cace"/><path d="M60 399H70L66 404V407L63 405V404Z" fill="#a8acb2"/>
<text x="76" y="404" clip-path="url(#use)">All Users</text>
<rect x="6" y="543" width="69" height="6.500" rx="3" fill="#555f70"/>
<rect x="7" y="567" width="14" height="14" rx="2.500" fill="#eee"/>
<text x="26" y="579" textLength="49">Invert f</text><use href="#chev" x="101" y="575"/>
<!-- layer table -->
<rect x="124" y="324" width="232" height="29" fill="#434c5e"/>
<path d="M146.500 324V353M263.500 324V353M286.500 324V353M309.500 324V353" stroke="#2f3541"/>
<text x="129" y="344" textLength="16" lengthAdjust="spacingAndGlyphs">S...</text><text x="152" y="344" textLength="40">Name</text>
<path d="M228 341L232 336L236 341Z" fill="#ddd"/>
<text x="247" y="344" textLength="15" lengthAdjust="spacingAndGlyphs">F...</text><text x="270" y="344" textLength="15" lengthAdjust="spacingAndGlyphs">L...</text><text x="293" y="344" textLength="15" lengthAdjust="spacingAndGlyphs">P...</text><text x="315" y="344" textLength="36">Color</text>
<rect x="238" y="324" width="3" height="248" fill="#2a303b"/>
<rect x="124" y="353" width="114" height="23" fill="#7086a8"/><rect x="241" y="353" width="114" height="23" fill="#7086a8"/>
<use href="#lyr" x="135" y="364"/><use href="#lyr" x="135" y="388"/><use href="#lyr" x="135" y="411"/><use href="#lyr" x="135" y="434"/><use href="#lyr" x="135" y="457"/><use href="#lyr" x="135" y="480"/>
<path d="M129 502L133 507L142 497" fill="none" stroke="#4ecb7a" stroke-width="2.200"/>
<text x="151" y="370">0</text>
<text x="151" y="393" textLength="36">Cubo</text>
<text x="151" y="416" textLength="66">Defpoints</text>
<text x="151" y="439" textLength="83">Dodecaedro</text>
<text x="151" y="462" textLength="64">Icosaedro</text>
<text x="151" y="485" textLength="64">Octaedro</text>
<text x="151" y="508" textLength="64">Tetraedro</text>
<g>
<use href="#snow" x="252" y="364"/><use href="#snow" x="252" y="388"/><use href="#snow" x="252" y="411"/><use href="#snow" x="252" y="434"/><use href="#snow" x="252" y="457"/><use href="#snow" x="252" y="480"/><use href="#sun" x="252" y="503"/>
<use href="#lock" x="274" y="364"/><use href="#lock" x="274" y="388"/><use href="#lock" x="274" y="411"/><use href="#lock" x="274" y="434"/><use href="#lock" x="274" y="457"/><use href="#lock" x="274" y="480"/><use href="#lock" x="274" y="503"/>
<use href="#print" x="298" y="364"/><use href="#print" x="298" y="388"/><use href="#print" x="298" y="411" opacity=".35"/><use href="#print" x="298" y="434"/><use href="#print" x="298" y="457"/><use href="#print" x="298" y="480"/><use href="#print" x="298" y="503"/>
</g>
<g fill="#fff"><rect x="313" y="357" width="15" height="15"/><rect x="313" y="381" width="15" height="15"/><rect x="313" y="404" width="15" height="15"/><rect x="313" y="427" width="15" height="15"/><rect x="313" y="450" width="15" height="15"/><rect x="313" y="473" width="15" height="15"/><rect x="313" y="496" width="15" height="15"/></g>
<g clip-path="url(#col)">
<text x="333" y="370">255</text><text x="333" y="393">255</text><text x="332" y="416">wh.</text><text x="333" y="439">255</text><text x="333" y="462">255</text><text x="333" y="485">255</text><text x="333" y="508">255</text>
</g>
<rect x="129" y="579" width="47" height="7" rx="3.500" fill="#555f70"/>
<text x="5" y="965" textLength="250">All: 7 layers displayed of 7 total layers</text>

<!-- COMMAND -->
<rect x="361" y="907" width="32" height="72" fill="#2c323d"/>
<path d="M366 912.500H384M366 916.500H384" stroke="#b8bcc2" stroke-dasharray="2 1.500" stroke-width="1.500"/>
<path d="M369 929L380 940M380 929L369 940" stroke="#c8ccd2" stroke-width="2"/>
<path d="M366 972L376 961A5 5 0 0 1 383 953L379 957L382 960L385 956A5 5 0 0 1 378 963L368 974Z" fill="#c8ccd2"/>
<rect x="393" y="907" width="1120" height="47" fill="url(#cg)"/>
<rect x="393" y="954" width="1120" height="1.500" fill="#1f2630"/>
<rect x="393" y="955" width="1120" height="24" fill="#b9bbbd"/>
<g clip-path="url(#cmd)"><text x="395" y="911" class="m">Command:</text></g>
<text x="395" y="928" class="m">Specify corner of window, enter a scale factor (nX or nXP), or</text>
<text x="395" y="948" class="m">[All/Center/Dynamic/Extents/Previous/Scale/Window/Object] &lt;real time&gt;:</text>
<rect x="398" y="959" width="19" height="15" fill="#9a9c9f" stroke="#333"/><path d="M398 963H417" stroke="#333"/><path d="M400 966L403 968L400 970M404 971H408" stroke="#333" fill="none"/>
<path d="M420 965H429L424.500 970Z" fill="#444"/>
<text x="437" y="972" class="m" font-style="italic" style="fill:#666a6e">Type a command</text>
<path d="M1497 970H1507L1502 964Z" fill="#444"/>
<rect y="977" width="361" height="7" fill="#3b4452"/><rect x="361" y="979" width="1557" height="5" fill="#3b4452"/>

<!-- STATUS / MODEL TABS -->
<rect y="984" width="1918" height="36" fill="#222933"/>
<use href="#burger" x="30" y="999"/>
<path d="M51 1014L63 984H137L125 1014Z" fill="#3b4452"/>
<text x="72" y="1005" textLength="44" font-weight="bold" style="fill:#f2f3f5">Model</text>
<text x="146.500" y="1005" textLength="79.500">A3-Rep.Dig.</text><use href="#slash" x="241.500" y="999"/>
<path d="M268 990V1008M259 999H277" stroke="#e8e8e8" stroke-width="2"/><use href="#slash" x="293" y="999"/>
<g fill="#3a4353">
<rect x="1204.500" y="986" width="58.500" height="30"/><rect x="1266" y="986" width="80" height="30"/><rect x="1349" y="986" width="130" height="30"/><rect x="1481" y="986" width="78" height="30"/><rect x="1563" y="986" width="132" height="30"/><rect x="1698" y="986" width="50" height="30"/><rect x="1749" y="986" width="30" height="30"/><rect x="1782" y="986" width="30" height="30"/><rect x="1815" y="986" width="38" height="30"/><rect x="1856" y="986" width="30" height="30"/><rect x="1888" y="986" width="30" height="30"/>
</g>
<text x="1209" y="1007" textLength="50">MODEL</text>
<path d="M1276 991V1011M1281 991V1011M1286 991V1011M1271 996H1291M1271 1001H1291M1271 1006H1291" stroke="#e6e8ea" stroke-width="1.100"/>
<g fill="#e6e8ea"><rect x="1303" y="993" width="3" height="3"/><rect x="1309" y="993" width="3" height="3"/><rect x="1315" y="993" width="3" height="3"/><rect x="1303" y="1000" width="3" height="3"/><rect x="1309" y="1000" width="3" height="3"/><rect x="1315" y="1000" width="3" height="3"/><rect x="1303" y="1007" width="3" height="3"/><rect x="1309" y="1007" width="3" height="3"/><rect x="1315" y="1007" width="3" height="3"/></g>
<use href="#arl" x="1336" y="1000"/>
<path d="M1354 992V1011H1374M1354 1005H1360V1011" fill="none" stroke="#d8d8d8" stroke-width="1.200"/>
<circle cx="1393" cy="1002" r="9" fill="none" stroke="#9aa0a8" stroke-width="1.400"/><path d="M1392 1002L1402 991M1392 1002H1403" stroke="#9aa0a8"/>
<use href="#arl" x="1419" y="1000"/>
<path d="M1437 990L1450 1012" stroke="#e05050"/><path d="M1444 990V1012" stroke="#3cc070" transform="rotate(-6 1444 1001)"/><rect x="1442" y="999" width="4" height="4" fill="#dcdcdc"/>
<use href="#arl" x="1469" y="1000"/>
<rect x="1481" y="987" width="28" height="28" fill="#5a8aba"/><rect x="1510" y="987" width="29" height="28" fill="#5a8aba"/>
<path d="M1486 1007L1500 992M1486 1007H1503M1486 1011H1505" stroke="#fff" stroke-width="1.300"/><rect x="1488" y="1002" width="4" height="4" fill="#fff"/>
<rect x="1516" y="992" width="19" height="19" fill="none" stroke="#fff" stroke-width="1.300"/><rect x="1514" y="989" width="5" height="5" fill="#5a8aba" stroke="#fff"/>
<use href="#arl" x="1549" y="1000"/>
<rect x="1564" y="987" width="28" height="28" fill="#5a8aba"/>
<path d="M1578 990L1585 1010L1578 1004L1571 1012Z" fill="#fff"/><circle cx="1586" cy="994" r="3" fill="none" stroke="#fff"/>
<path d="M1606 991L1613 1011L1606 1005L1599 1012Z" fill="#d8d8d8"/><path d="M1614 991L1611 997H1615L1612 1002" stroke="#d8d8d8" fill="none"/>
<path d="M1637 991L1644 1011L1637 1005L1630 1012Z" fill="#d8d8d8"/>
<text x="1658" y="1007" font-size="13.500">1:1</text><use href="#arl" x="1685" y="1000"/>
<use href="#gear" x="1712" y="1001"/><use href="#arl" x="1738" y="1000"/>
<path d="M1763.500 992V1011M1754 1001.500H1773" stroke="#dcdcdc" stroke-width="2.400"/>
<rect x="1788" y="992" width="7" height="7" fill="none" stroke="#d8d8d8"/><circle cx="1803" cy="999" r="4.500" fill="none" stroke="#d8d8d8"/><path d="M1795 1004L1799 1011H1790Z" fill="none" stroke="#d8d8d8"/>
<path d="M1824 990H1836L1842 996V1012H1824Z" fill="#3e7cc4"/><rect x="1824" y="1003" width="18" height="9" fill="#e8b94c"/><path d="M1834 1008L1837 1011L1843 1004" stroke="#4ecb7a" stroke-width="1.800" fill="none"/>
<rect x="1862" y="992" width="19" height="17" fill="#4b5463" stroke="#c8ccd2"/><path d="M1866 1005L1870 1001M1877 996L1873 1000M1874 996H1877V999M1866 1002V1005H1869" stroke="#d8d8d8" fill="none"/>
<use href="#burger" x="1903" y="1001"/>

<!-- TASKBAR -->
<rect y="1020" width="1918" height="58" fill="#eeeeee"/><rect y="1020" width="1918" height="1" fill="#d8d8d8"/>
<g><rect x="26" y="1036" width="14" height="14" fill="#4cc2f1"/><rect x="41" y="1036" width="14" height="14" fill="#2f9fe6"/><rect x="26" y="1051" width="14" height="14" fill="#1b8fe0"/><rect x="41" y="1051" width="14" height="14" fill="#0c74cf"/></g>
<path d="M82 1037H93L96 1040H112V1063H82Z" fill="#e6b33e"/><rect x="82" y="1042" width="30" height="21" fill="#fcd65b"/><rect x="89" y="1052" width="16" height="11" rx="1" fill="#2d8fd5"/><path d="M93 1056H101" stroke="#0e5a9a"/>
<circle cx="152" cy="1048" r="14" fill="#7a12a0"/><path d="M146 1048m-4 0a4 4 0 1 0 8 0a4 4 0 1 0-8 0M154 1048m-4 0a4 4 0 1 0 8 0a4 4 0 1 0-8 0" fill="none" stroke="#fff" stroke-width="2.500"/><circle cx="160" cy="1058" r="6" fill="#f26a2c"/><circle cx="160" cy="1058" r="3" fill="#8a3dc6"/>
<circle cx="208" cy="1050" r="14" fill="#f0765a"/><path d="M208 1050V1036A14 14 0 0 1 222 1050Z" fill="#ff9a7c"/><path d="M208 1050H222A14 14 0 0 1 198 1060Z" fill="#c6492a"/><rect x="191" y="1042" width="15" height="15" fill="#c2401f"/><text x="198.500" y="1054.500" text-anchor="middle" font-size="13" font-weight="bold" style="fill:#fff">P</text>
<rect x="254" y="1036" width="23" height="29" fill="#2b7cd3"/><rect x="254" y="1036" width="23" height="8" fill="#41a5ee"/><rect x="254" y="1053" width="23" height="12" fill="#185abd"/><rect x="247" y="1042" width="16" height="16" fill="#1651ac"/><text x="255" y="1055" text-anchor="middle" font-size="13" font-weight="bold" style="fill:#fff">W</text>
<path d="M305 1035H327L330 1038V1065H303V1037Z" fill="#f77f0e"/><rect x="305" y="1056" width="25" height="9" fill="#80400c"/><text x="317" y="1052" text-anchor="middle" font-size="17" font-weight="bold" style="fill:#fff">F</text><text x="317" y="1063" text-anchor="middle" font-size="7" font-weight="bold" style="fill:#f5c79a">FUS</text>
<rect x="359" y="1037" width="25" height="26" rx="4" fill="#fff"/><path d="M364 1058Q370 1040 376 1041Q379 1042 381 1050" fill="none" stroke="#4876d6" stroke-width="2.500" stroke-linecap="round"/>
<circle cx="427" cy="1050" r="13" fill="#1e1e1e"/><circle cx="427" cy="1050" r="10" fill="none" stroke="#666" stroke-width="1"/><path d="M427 1042A5 5 0 0 1 431 1050M434 1055A5 5 0 0 1 425 1053M419 1053A5 5 0 0 1 425 1046" fill="none" stroke="#ccc" stroke-width="3"/>
<circle cx="482" cy="1052" r="13" fill="#f3601f"/><path d="M470 1047Q472 1040 476 1039Q476 1043 480 1042Q486 1040 487 1033Q496 1042 494 1052Q488 1040 478 1044Z" fill="#ffb52a"/><circle cx="482" cy="1051" r="7" fill="#6f3bd0"/><path d="M476 1050Q482 1042 488 1048Q482 1046 480 1052Z" fill="#f3601f"/>
<rect x="525" y="1035" width="22" height="30" rx="1.500" fill="#707a88"/><rect x="528" y="1038" width="16" height="5" fill="#63c4e6"/><g fill="#c9d4de"><rect x="528" y="1045" width="4" height="4"/><rect x="534" y="1045" width="4" height="4"/><rect x="540" y="1045" width="4" height="4"/><rect x="528" y="1051" width="4" height="4"/><rect x="534" y="1051" width="4" height="4"/><rect x="528" y="1057" width="4" height="4"/><rect x="534" y="1057" width="4" height="4"/></g><rect x="540" y="1051" width="4" height="10" fill="#11508a"/>
<rect x="568" y="1026" width="48" height="48" rx="4" fill="#fdfdfd"/>
<rect x="578" y="1036" width="28" height="20" fill="#e0104f"/><path d="M578 1036L582 1033H606V1036Z" fill="#e8356f"/><rect x="580" y="1056" width="26" height="9" fill="#8e0c34"/><text x="593" y="1052" text-anchor="middle" font-size="16" font-weight="bold" style="fill:#fff">A</text><text x="593" y="1063.500" text-anchor="middle" font-size="7" font-weight="bold" style="fill:#fff">CAD</text>
<rect x="584" y="1070" width="17" height="4" rx="2" fill="#0067c0"/>
<circle cx="647" cy="1050" r="14" fill="#1ed760"/><path d="M638 1045Q647 1042 656 1047M639 1050Q647 1048 655 1052M640 1055Q647 1053 653 1056" fill="none" stroke="#1a1a1a" stroke-width="2" stroke-linecap="round"/>
<rect x="690.500" y="1053" width="11" height="11" rx="1.500" fill="none" stroke="#c93f1d" stroke-width="2" stroke-dasharray="3 1.500"/><path d="M698 1058L710 1072M712 1058L703 1066" stroke="#8a8f96" stroke-width="1.800"/><circle cx="713" cy="1060" r="2.500" fill="none" stroke="#2098e8" stroke-width="1.600"/><circle cx="703" cy="1075" r="2.500" fill="none" stroke="#2098e8" stroke-width="1.600"/>
<path d="M743 1035H760L768 1043V1064H743Z" fill="#f5f5f5" stroke="#999"/><path d="M745 1050H765V1063H745Z" fill="#7cc63a"/><rect x="745" y="1043" width="20" height="8" fill="#dfeecb"/><path d="M751 1055V1044" stroke="#222" stroke-width="2"/><path d="M756 1049H760M758 1047V1051M762 1049H765" stroke="#222"/><path d="M760 1060L770 1036L772 1037L762 1061Z" fill="#e8a816"/>
<g fill="#8a8a8a"><rect x="93" y="1070" width="8" height="4" rx="2"/><rect x="148" y="1070" width="8" height="4" rx="2"/><rect x="258" y="1070" width="8" height="4" rx="2"/><rect x="478" y="1070" width="8" height="4" rx="2"/><rect x="532" y="1070" width="8" height="4" rx="2"/><rect x="643" y="1070" width="8" height="4" rx="2"/><rect x="699" y="1070" width="8" height="4" rx="2"/><rect x="753" y="1070" width="8" height="4" rx="2"/></g>
<!-- tray -->
<path d="M1587 1053L1593 1047L1599 1053" fill="none" stroke="#1a1a1a" stroke-width="1.600"/>
<path d="M1624 1048A9 9 0 0 1 1641 1046M1641 1041V1046H1636M1626 1056A9 9 0 0 0 1632 1059M1624 1061V1056H1629" fill="none" stroke="#1a1a1a" stroke-width="1.300"/><circle cx="1638" cy="1055" r="5.500" fill="#0f78dc"/>
<text x="1681" y="1046" text-anchor="middle" class="tb">ENG</text><text x="1681" y="1066" text-anchor="middle" class="tb">PT</text>
<path d="M1720 1046Q1728 1040 1736 1046M1722.500 1050Q1728 1045 1733.500 1050M1725 1053.500Q1728 1051 1731 1053.500" fill="none" stroke="#1a1a1a" stroke-width="1.300"/><circle cx="1728" cy="1057" r="1.500" fill="#1a1a1a"/>
<path d="M1749 1047H1753L1758 1043V1058L1753 1054H1749Z" fill="none" stroke="#1a1a1a" stroke-width="1.200"/><path d="M1761 1046Q1764 1050 1761 1055" fill="none" stroke="#444"/><path d="M1763 1044Q1767 1050 1763 1057" fill="none" stroke="#999"/>
<rect x="1779" y="1045" width="18" height="10" rx="2" fill="#1a1a1a"/><rect x="1797" y="1048" width="2" height="4" fill="#1a1a1a"/><path d="M1784 1040L1781 1047H1785L1782 1053" stroke="#1a1a1a" fill="none"/>
<text x="1896" y="1045" text-anchor="end" class="tm">3:06 PM</text><text x="1896" y="1065" text-anchor="end" class="tm">10/21/2025</text>
</svg>
</body></html>
